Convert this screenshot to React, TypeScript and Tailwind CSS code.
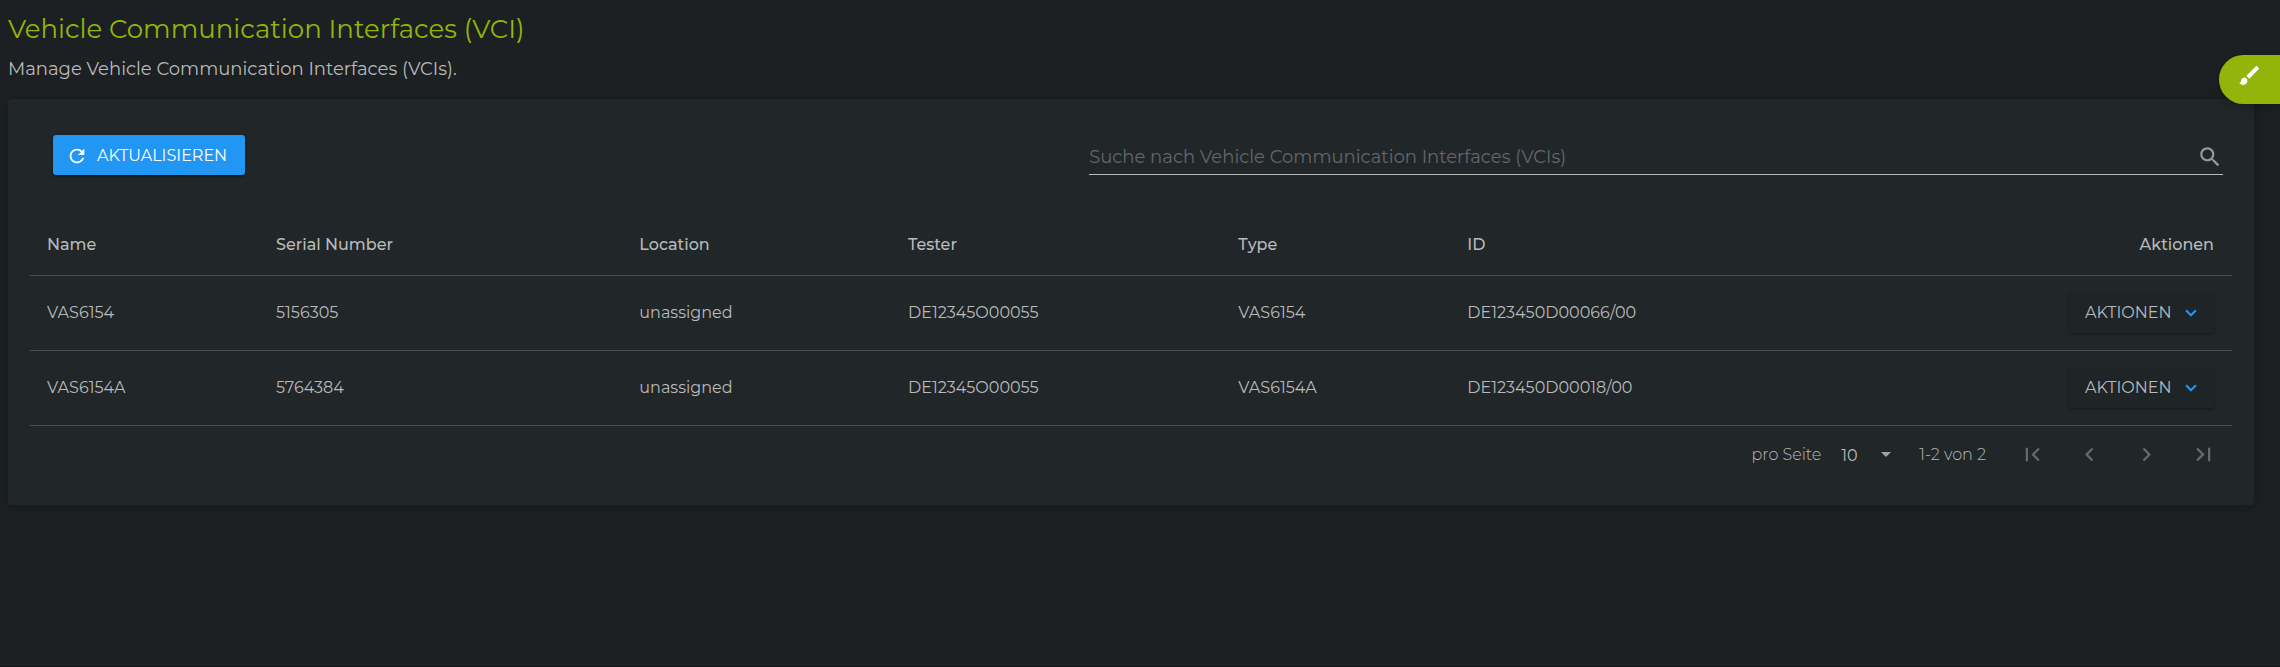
import type { ReactNode } from "react";

type Vci = { name: string; serial: string; location: string; tester: string; type: string; id: string };

const rows: Vci[] = [
  { name: "VAS6154", serial: "5156305", location: "unassigned", tester: "DE12345O00055", type: "VAS6154", id: "DE123450D00066/00" },
  { name: "VAS6154A", serial: "5764384", location: "unassigned", tester: "DE12345O00055", type: "VAS6154A", id: "DE123450D00018/00" },
];

const columns = [
  { label: "Name", width: "w-[10.4%]" },
  { label: "Serial Number", width: "w-[16.5%]" },
  { label: "Location", width: "w-[12.2%]" },
  { label: "Tester", width: "w-[15%]" },
  { label: "Type", width: "w-[10.4%]" },
  { label: "ID", width: "w-auto" },
];

function Icon({ d, className }: { d: string; className: string }) {
  return (
    <svg viewBox="0 0 24 24" fill="currentColor" aria-hidden="true" className={className}>
      <path d={d} />
    </svg>
  );
}

function PageButton({ label, d }: { label: string; d: string }) {
  return (
    <button type="button" disabled aria-label={label} className="flex h-14 w-[57px] items-center justify-center text-[#666a6c]">
      <Icon d={d} className="size-[27px]" />
    </button>
  );
}

function Cell({ children }: { children: ReactNode }) {
  return <td className="pl-[17px]">{children}</td>;
}

export default function App() {
  return (
    <div className="relative min-h-screen border-b border-[#141719] bg-[#1c2022] pr-[26px] pl-2 font-['Montserrat','Inter',sans-serif] text-[16px] text-[#b8babb]">
      <header>
        <h1 className="pt-[10px] text-[26px] leading-[38px] text-[#93b50b]">Vehicle Communication Interfaces (VCI)</h1>
        <p className="pt-2 text-[18px] leading-[26px]">Manage Vehicle Communication Interfaces (VCIs).</p>
      </header>

      <main className="mt-[17px] rounded bg-[#212629] px-[22px] pt-9 pb-[22px] shadow-[0_2px_12px_rgba(0,0,0,0.25)]">
        <div className="flex items-start justify-between pr-[9px] pl-[23px]">
          <button type="button" className="flex h-10 items-center gap-[9px] rounded-[3px] bg-[#2196f3] pt-px pr-[18px] pl-[13px] text-white shadow-[0_1px_3px_rgba(0,0,0,0.5)]">
            <Icon
              className="size-[22px]"
              d="M17.65 6.35C16.2 4.9 14.21 4 12 4c-4.42 0-7.99 3.58-7.99 8s3.57 8 7.99 8c3.73 0 6.84-2.55 7.73-6h-2.08c-.82 2.33-3.04 4-5.65 4-3.31 0-6-2.69-6-6s2.69-6 6-6c1.66 0 3.14.69 4.22 1.78L13 11h7V4l-2.35 2.35z"
            />
            AKTUALISIEREN
          </button>
          <label className="flex h-10 w-[52.25%] items-center border-b border-[#b8babb] pt-1">
            <input
              type="search"
              aria-label="Suche"
              placeholder="Suche nach Vehicle Communication Interfaces (VCIs)"
              className="h-8 min-w-0 flex-1 bg-transparent text-[18px] outline-none placeholder:text-[#63676a]"
            />
            <Icon
              className="size-[26px] text-[#969a9b]"
              d="M15.5 14h-.79l-.28-.27C15.41 12.59 16 11.11 16 9.5 16 5.91 13.09 3 9.5 3S3 5.91 3 9.5 5.91 16 9.5 16c1.61 0 3.09-.59 4.23-1.57l.27.28v.79l5 4.99L20.49 19l-4.99-5zm-6 0C7.01 14 5 11.99 5 9.5S7.01 5 9.5 5 14 7.01 14 9.5 11.99 14 9.5 14z"
            />
          </label>
        </div>

        <table className="mt-[38px] w-full table-fixed border-collapse text-left">
          <thead>
            <tr className="h-[62px] border-b border-[#4b5052]">
              {columns.map((c) => (
                <th key={c.label} scope="col" className={`${c.width} pt-0.5 pl-[17px] font-medium`}>
                  {c.label}
                </th>
              ))}
              <th scope="col" className="w-[12%] pt-0.5 pr-[18px] text-right font-medium">
                Aktionen
              </th>
            </tr>
          </thead>
          <tbody>
            {rows.map((r) => (
              <tr key={r.name} className="h-[75px] border-b border-[#4b5052]">
                <Cell>{r.name}</Cell>
                <Cell>{r.serial}</Cell>
                <Cell>{r.location}</Cell>
                <Cell>{r.tester}</Cell>
                <Cell>{r.type}</Cell>
                <Cell>{r.id}</Cell>
                <td className="pr-[18px]">
                  <button type="button" className="ml-auto flex h-10 w-[145px] items-center justify-between rounded-[3px] bg-[#1f2427] pt-px pr-3 pl-4 shadow-[0_1px_3px_rgba(0,0,0,0.35)]">
                    AKTIONEN
                    <Icon className="size-[22px] text-[#2196f3]" d="M7.41 8.2L12 12.78l4.59-4.58L18.2 9.8 12 16 5.8 9.8z" />
                  </button>
                </td>
              </tr>
            ))}
          </tbody>
        </table>

        <nav aria-label="Seiten" className="flex h-14 items-center justify-end pt-px box-content">
          <label htmlFor="page-size" className="font-light">pro Seite</label>
          <span className="relative ml-5 flex items-center">
            <select id="page-size" defaultValue="10" className="h-8 w-[54px] appearance-none bg-transparent pt-[3px] outline-none">
              <option>10</option>
            </select>
            <svg viewBox="0 0 10 5" fill="currentColor" aria-hidden="true" className="pointer-events-none absolute right-1 h-[5px] w-[10px] text-[#a0a3a5]">
              <path d="M0 0h10L5 5z" />
            </svg>
          </span>
          <span className="mr-[18px] ml-6 font-light">1-2 von 2</span>
          <PageButton label="Erste Seite" d="M18.41 16.59L13.82 12l4.59-4.59L17 6l-6 6 6 6zM6 6h2v12H6z" />
          <PageButton label="Vorherige Seite" d="M15.41 7.41L14 6l-6 6 6 6 1.41-1.41L10.83 12z" />
          <PageButton label="Nächste Seite" d="M10 6L8.59 7.41 13.17 12l-4.58 4.59L10 18l6-6z" />
          <PageButton label="Letzte Seite" d="M5.59 7.41L10.18 12l-4.59 4.59L7 18l6-6-6-6zM16 6h2v12h-2z" />
        </nav>
      </main>

      <button
        type="button"
        aria-label="Design anpassen"
        className="absolute top-[55px] right-0 flex h-[49px] w-[61px] items-start rounded-l-full bg-[#93b50b] pt-2 pl-[18px] text-white shadow-[0_3px_10px_rgba(0,0,0,0.2)]"
      >
        <Icon
          className="size-[25px]"
          d="M7 14c-1.66 0-3 1.34-3 3 0 1.31-1.16 2-2 2 .92 1.22 2.49 2 4 2 2.21 0 4-1.79 4-4 0-1.66-1.34-3-3-3zm13.71-9.37l-1.34-1.34c-.39-.39-1.02-.39-1.41 0L9 12.25 11.75 15l8.96-8.96c.39-.39.39-1.02 0-1.41z"
        />
      </button>
    </div>
  );
}
